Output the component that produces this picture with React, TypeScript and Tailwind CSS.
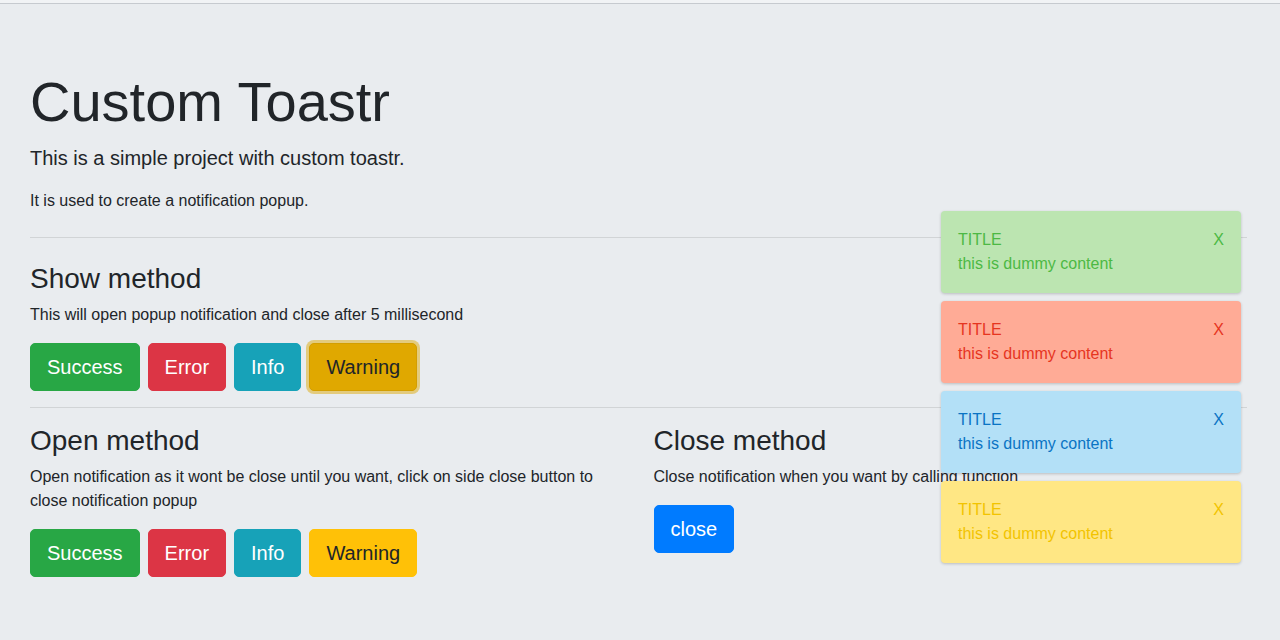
import React from "react";

const font = { fontFamily: '"Liberation Sans", Arial, sans-serif' };

function Btn({ cls, children }: { cls: string; children: React.ReactNode }) {
  return (
    <button
      className={`h-[48px] px-4 rounded-[5px] border text-[20px] leading-[30px] ${cls}`}
    >
      {children}
    </button>
  );
}

function Buttons({ focused }: { focused?: boolean }) {
  return (
    <div className="flex gap-2">
      <Btn cls="bg-[#28a745] border-[#28a745] text-white">Success</Btn>
      <Btn cls="bg-[#dc3545] border-[#dc3545] text-white">Error</Btn>
      <Btn cls="bg-[#17a2b8] border-[#17a2b8] text-white">Info</Btn>
      {focused ? (
        <Btn cls="bg-[#e0a800] border-[#d39e00] text-[#212529] shadow-[0_0_0_3px_rgba(222,170,12,0.5)]">
          Warning
        </Btn>
      ) : (
        <Btn cls="bg-[#ffc107] border-[#ffc107] text-[#212529]">Warning</Btn>
      )}
    </div>
  );
}

function Toast({ bg, fg }: { bg: string; fg: string }) {
  return (
    <div
      className={`w-[300px] h-[82px] rounded-[4px] p-[17px] shadow-[0_1px_3px_rgba(0,0,0,0.2)] text-[16px] leading-[24px] ${bg} ${fg}`}
    >
      <div className="flex justify-between">
        <span>TITLE</span>
        <span>X</span>
      </div>
      <div>this is dummy content</div>
    </div>
  );
}

export default function App() {
  return (
    <div style={font} className="min-h-[640px] bg-[#e9ecef] text-[#212529] relative">
      <div className="h-[3px] bg-[#f1f3f5]" />
      <div className="h-px bg-[#c6cacf]" />
      <div className="pl-[30px] pr-[33px] pt-[64px] pb-16">
        <h1 className="text-[56px] leading-[1.2] font-light mb-2">Custom Toastr</h1>
        <p className="text-[20px] leading-[30px] font-light mb-4">
          This is a simple project with custom toastr.
        </p>
        <p className="text-[16px] leading-[24px]">It is used to create a notification popup.</p>
        <hr className="my-6 border-t border-[rgba(0,0,0,0.1)]" />
        <h3 className="text-[28px] leading-[1.2] mb-[7px]">Show method</h3>
        <p className="text-[16px] leading-[24px] mb-4">
          This will open popup notification and close after 5 millisecond
        </p>
        <Buttons focused />
        <hr className="mt-4 mb-4 border-t border-[rgba(0,0,0,0.1)]" />
        <div className="grid grid-cols-2 gap-[30px]">
          <div>
            <h3 className="text-[28px] leading-[1.2] mb-2">Open method</h3>
            <p className="text-[16px] leading-[24px] mb-4">
              Open notification as it wont be close until you want, click on side close button to
              close notification popup
            </p>
            <Buttons />
          </div>
          <div>
            <h3 className="text-[28px] leading-[1.2] mb-2">Close method</h3>
            <p className="text-[16px] leading-[24px] mb-4">
              Close notification when you want by calling function
            </p>
            <Btn cls="bg-[#007bff] border-[#007bff] text-white">close</Btn>
          </div>
        </div>
      </div>
      <div className="absolute top-[211px] right-[39px] flex flex-col gap-2">
        <Toast bg="bg-[#bce5b1]" fg="text-[#4cb944]" />
        <Toast bg="bg-[#ffab96]" fg="text-[#e6351f]" />
        <Toast bg="bg-[#b3e0f7]" fg="text-[#0a74c4]" />
        <Toast bg="bg-[#ffe784]" fg="text-[#f2c300]" />
      </div>
    </div>
  );
}
